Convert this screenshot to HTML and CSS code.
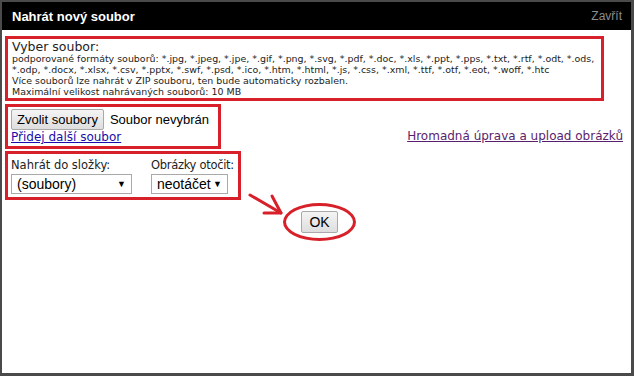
FILE: index.html
```html
<!doctype html>
<html lang="cs">
  <head>
    <meta charset="UTF-8" />
    <title>Nahrát nový soubor</title>
    <link rel="stylesheet" href="styles.css">
  </head>
  <body>
    <div class="dialog">
      <div class="dlg-head">
        <span class="dlg-title">Nahrát nový soubor</span>
        <a class="dlg-close" href="#">Zavřít</a>
      </div>
      <div class="dlg-body">
        <div class="mark info">
          <div class="info-title">Vyber soubor:</div>
          <div class="info-text">
            podporované formáty souborů: *.jpg, *.jpeg, *.jpe, *.gif, *.png, *.svg, *.pdf, *.doc, *.xls, *.ppt, *.pps, *.txt, *.rtf, *.odt, *.ods,<br />
            *.odp, *.docx, *.xlsx, *.csv, *.pptx, *.swf, *.psd, *.ico, *.htm, *.html, *.js, *.css, *.xml, *.ttf, *.otf, *.eot, *.woff, *.htc<br />
            Více souborů lze nahrát v ZIP souboru, ten bude automaticky rozbalen.<br />
            Maximální velikost nahrávaných souborů: 10 MB
          </div>
        </div>

        <div class="file-row">
          <div class="mark files">
            <div class="file-pick">
              <button type="button" class="btn">Zvolit soubory</button>
              <span class="file-name">Soubor nevybrán</span>
            </div>
            <a class="add-link" href="#">Přidej další soubor</a>
          </div>
          <a class="bulk-link" href="#">Hromadná úprava a upload obrázků</a>
        </div>

        <div class="mark opts">
          <label class="opt">
            <span class="opt-label">Nahrát do složky:</span>
            <span class="sel sel-folder">(soubory)<span class="caret">▼</span></span>
          </label>
          <label class="opt">
            <span class="opt-label">Obrázky otočit:</span>
            <span class="sel sel-rotate">neotáčet<span class="caret">▼</span></span>
          </label>
        </div>

        <div class="submit">
          <svg class="arrow" width="40" height="30" viewBox="0 0 40 30">
            <path d="M2 4 L33 22" />
            <path d="M24 5 L33 22 L16 22" />
          </svg>
          <span class="ring"><button type="submit" class="btn btn-ok">OK</button></span>
        </div>
      </div>
    </div>
  </body>
</html>
```

FILE: styles.css
```css
body {
  margin: 0;
  font-family: "Liberation Sans", Arial, sans-serif;
  background: #4a4a4a;
}
.dialog {
  width: 634px;
  height: 376px;
  box-sizing: border-box;
  border: 2px solid #4a4a4a;
  border-right-width: 3px;
  border-bottom-width: 3px;
  background: #fff;
}
.dlg-head {
  height: 28px;
  background: #000;
  display: flex;
  align-items: center;
  justify-content: space-between;
  padding: 0 9px 0 10px;
}
.dlg-title {
  color: #fff;
  font-weight: bold;
  font-size: 13px;
}
.dlg-close {
  color: #8c8c8c;
  font-size: 12px;
  text-decoration: none;
}
.dlg-body {
  position: relative;
  padding: 6px 8px 0 3px;
  font-family: "DejaVu Sans", Tahoma, sans-serif;
  white-space: nowrap;
}
/* red annotation frames */
.mark {
  border: 3px solid #d8202a;
  box-sizing: border-box;
}
.info {
  width: 599px;
  padding: 1px 4px 1px;
}
.info-title {
  font-size: 12.5px;
  line-height: 13px;
  color: #222;
}
.info-text {
  font-size: 9.45px;
  line-height: 11px;
  color: #222;
}
.file-row {
  display: flex;
  justify-content: space-between;
  align-items: flex-end;
  margin-top: 3px;
}
.files {
  width: 216px;
  padding: 2px 3px 2px;
}
.file-pick {
  display: flex;
  align-items: center;
  gap: 6px;
}
.btn {
  font-family: "Liberation Sans", Arial, sans-serif;
  font-size: 13px;
  color: #000;
  background: linear-gradient(#f4f4f4, #dedede);
  border: 1px solid #a9a9a9;
  border-radius: 2px;
  padding: 0 5px;
  height: 21px;
}
.file-name {
  font-family: "Liberation Sans", Arial, sans-serif;
  font-size: 13px;
}
.add-link {
  display: block;
  font-size: 12px;
  line-height: 14px;
  color: #1a0dab;
}
.bulk-link {
  font-size: 12px;
  color: #5a1e6e;
  margin-bottom: 6px;
}
.opts {
  width: 236px;
  margin-top: 2px;
  padding: 4px 3px 3px;
  display: flex;
  gap: 19px;
}
.opt {
  display: flex;
  flex-direction: column;
  flex-shrink: 0;
}
.opt-label {
  font-size: 11.5px;
  line-height: 15px;
  color: #222;
}
.opt + .opt .opt-label {
  letter-spacing: -0.3px;
}
.sel {
  font-family: "Liberation Sans", Arial, sans-serif;
  font-size: 14px;
  height: 20px;
  box-sizing: border-box;
  border: 1px solid #a9a9a9;
  display: flex;
  align-items: center;
  justify-content: space-between;
  padding: 0 5px;
  margin-top: 1px;
}
.sel-folder { width: 121px; }
.sel-rotate { width: 77px; }
.caret {
  font-size: 9px;
}
.submit {
  position: relative;
  padding: 3px 0 0 278px;
}
.arrow {
  position: absolute;
  left: 243px;
  top: -9px;
}
.arrow path {
  fill: none;
  stroke: #d8202a;
  stroke-width: 3;
  stroke-linecap: round;
  stroke-linejoin: round;
}
.ring {
  display: inline-flex;
  align-items: center;
  justify-content: center;
  width: 73px;
  height: 38px;
  box-sizing: border-box;
  border: 3px solid #d8202a;
  border-radius: 50%;
}
.btn-ok {
  height: 22px;
  padding: 0 7px;
  font-size: 14px;
}
```
